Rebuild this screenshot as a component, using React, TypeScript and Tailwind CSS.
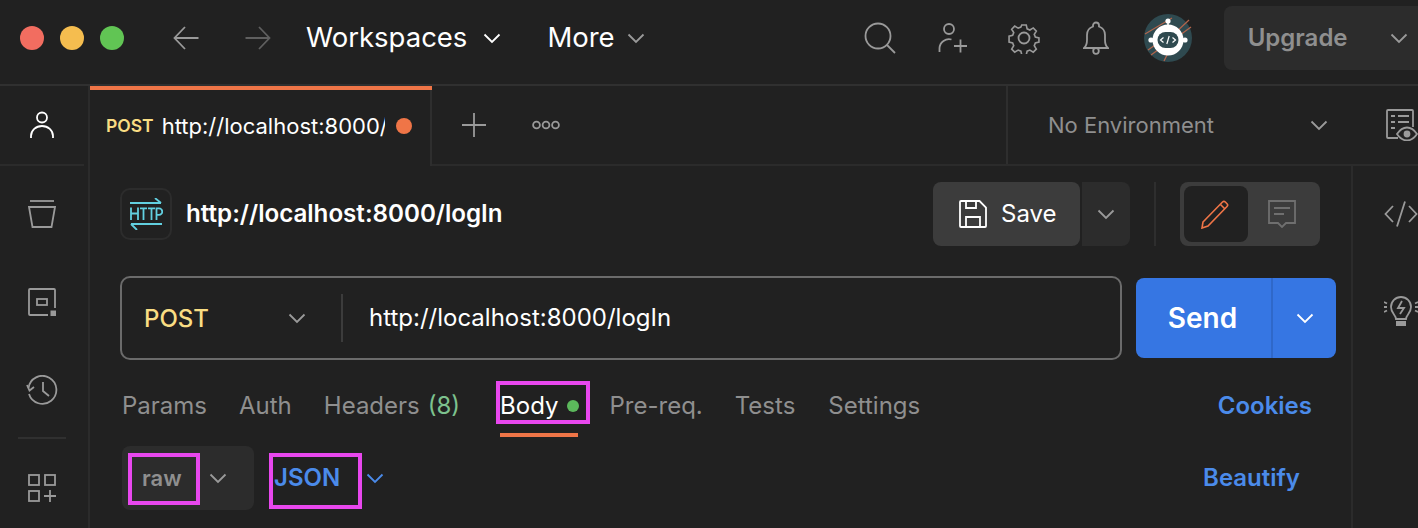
const Chevron = ({ className = "text-[#8f8f8f]", size = 18 }: { className?: string; size?: number }) => (
  <svg width={size} height={size} viewBox="0 0 18 18" fill="none" stroke="currentColor" strokeWidth="1.8" className={`shrink-0 ${className}`}>
    <path d="M1.5 5.5 9 13l7.5-7.5" />
  </svg>
);

function Avatar() {
  return (
    <svg width="48" height="48" viewBox="0 0 48 48" className="shrink-0">
      <circle cx="24" cy="24" r="24" fill="#2f4a50" />
      <g stroke="#b3654c" strokeWidth="1.2" fill="none">
        <path d="M1 20 28 4" />
        <path d="M30 20 45 6" />
        <path d="M36 21 47 13" />
        <path d="M7 41 18 33" />
        <path d="M4 36 14 29" />
        <path d="M20 47 27 33" />
      </g>
      <circle cx="24" cy="7" r="2.6" fill="#fff" />
      <rect x="23.2" y="7" width="1.6" height="5" fill="#fff" />
      <circle cx="7" cy="26" r="2.6" fill="#fff" />
      <circle cx="41" cy="26" r="2.6" fill="#fff" />
      <circle cx="24" cy="26" r="15.5" fill="#fff" />
      <rect x="13.5" y="18" width="21" height="16" rx="8" fill="#2f4a50" />
      <g stroke="#fff" strokeWidth="1.2" fill="none">
        <path d="M19.5 23.5 16.5 26l3 2.5" />
        <path d="M28.5 23.5 31.5 26l-3 2.5" />
        <path d="M25.2 22 22.8 30" />
      </g>
    </svg>
  );
}

function HttpIcon() {
  return (
    <div className="w-[52px] h-[52px] rounded-[10px] border-2 border-[#2c2c2c] flex items-center justify-center shrink-0">
      <svg width="34" height="32" viewBox="0 0 34 32" fill="none" stroke="#62d0e0" strokeWidth="1.8">
        <path d="M1 5h31M26 0l6 5" />
        <path d="M33 26H2M8 32l-6-6" />
        <path d="M2 9.500V22M9 9.500V22M2 15.500h7" />
        <path d="M11 10.400h7M14.500 10.400V22" />
        <path d="M19 10.400h7M22.500 10.400V22" />
        <path d="M27.500 22V10.400h2.500a2.800 2.800 0 0 1 0 6.500h-2.500" />
      </svg>
    </div>
  );
}

function BodyTab() {
  return (
    <div className="relative flex items-center gap-[8px] text-white">
      <span>Body</span>
      <span className="w-[12px] h-[12px] rounded-full bg-[#5cb85c]" />
      <div className="absolute left-[-4px] top-[-7px] w-[94px] h-[43px] border-[4px] border-[#e847ee]" />
      <div className="absolute left-0 top-[45px] w-[78px] h-[4px] bg-[#ef7547]" />
    </div>
  );
}

export default function App() {
  return (
    <div className="w-[1418px] h-[528px] overflow-hidden bg-[#212121] flex flex-col font-['Inter',sans-serif]">
      {/* top bar */}
      <div className="h-[86px] shrink-0 border-b-2 border-[#303030] flex items-center">
        <div className="flex shrink-0 gap-[16px] ml-[20px] mb-[8px]">
          <span className="w-[24px] h-[24px] rounded-full bg-[#f26d60]" />
          <span className="w-[24px] h-[24px] rounded-full bg-[#f5bd4f]" />
          <span className="w-[24px] h-[24px] rounded-full bg-[#61c554]" />
        </div>
        <svg width="26" height="24" viewBox="0 0 26 24" fill="none" stroke="#9a9a9a" strokeWidth="1.8" className="shrink-0 ml-[49px] mb-[8px]">
          <path d="M25.500 12H1.500M12 1 1.500 12 12 23" />
        </svg>
        <svg width="26" height="24" viewBox="0 0 26 24" fill="none" stroke="#5f5f5f" strokeWidth="1.8" className="shrink-0 ml-[46px] mb-[8px]">
          <path d="M.5 12h24M14 1l10.500 11L14 23" />
        </svg>
        <span className="shrink-0 ml-[35px] mb-[8px] text-[27.500px] text-white">Workspaces</span>
        <Chevron className="ml-[16px] mb-[8px] text-white" />
        <span className="shrink-0 ml-[46px] mb-[8px] text-[27.500px] text-white">More</span>
        <Chevron className="ml-[12px] mb-[8px] text-[#9a9a9a]" />
        <svg width="32" height="32" viewBox="0 0 32 32" fill="none" stroke="#9a9a9a" strokeWidth="1.800" className="shrink-0 ml-[219px] mb-[8px]">
          <circle cx="14" cy="14" r="12.500" />
          <path d="m23 23 8 8" />
        </svg>
        <svg width="30" height="32" viewBox="0 0 30 32" fill="none" stroke="#9a9a9a" strokeWidth="1.800" className="shrink-0 ml-[42px] mb-[8px]">
          <circle cx="11" cy="7" r="5" />
          <path d="M1.500 30v-4a9.500 9.500 0 0 1 12-8.500" />
          <path d="M16 24h13M22.500 17.500v13" />
        </svg>
        <svg width="32" height="32" viewBox="0 0 32 32" fill="none" stroke="#9a9a9a" strokeWidth="1.800" className="shrink-0 ml-[40px] mb-[8px]">
          <circle cx="16" cy="16" r="5.500" />
          <path d="M13.500 1.500h5l1 4.300 3 1.300 3.800-2.300 3.400 3.500-2.300 3.700 1.200 3 4 1v4.500l-4 1-1.200 3 2.300 3.800-3.400 3.400-3.800-2.300-3 1.200-1 4h-5l-1-4-3-1.200-3.800 2.300-3.400-3.400 2.300-3.800-1.200-3-4-1V14l4-1 1.200-3-2.300-3.700 3.400-3.500 3.800 2.300 3-1.300z" transform="translate(1.600 1.600) scale(.9)" />
        </svg>
        <svg width="26" height="34" viewBox="0 0 26 34" fill="none" stroke="#9a9a9a" strokeWidth="1.800" className="shrink-0 ml-[43px] mb-[8px]">
          <path d="M1 27c2.500-2 3-4 3-8v-5a9 9 0 0 1 6-8.500V4.500a3 3 0 0 1 6 0V5.500A9 9 0 0 1 22 14v5c0 4 .5 6 3 8z" />
          <circle cx="13" cy="30" r="2.800" />
        </svg>
        <div className="shrink-0 ml-[35px] mb-[8px]"><Avatar /></div>
        <div className="ml-[32px] mb-[8px] w-[220px] h-[64px] shrink-0 bg-[#2c2c2c] rounded-[8px] flex items-center pl-[24px]">
          <span className="text-[24px] font-semibold text-[#8f8f8f]">Upgrade</span>
          <Chevron className="ml-[42px] text-[#9a9a9a]" />
        </div>
      </div>

      <div className="flex flex-1 min-h-0">
        {/* sidebar */}
        <div className="w-[90px] shrink-0 border-r-2 border-[#2b2b2b] flex flex-col">
          <div className="h-[80px] shrink-0 border-b-2 border-[#2b2b2b] flex items-center justify-center mr-[4px]">
            <svg width="26" height="28" viewBox="0 0 26 28" fill="none" stroke="#fff" strokeWidth="1.800">
              <circle cx="13" cy="6.500" r="5" />
              <path d="M2 27v-2a11 10 0 0 1 22 0v2" />
            </svg>
          </div>
          <div className="h-[88px] mt-[4px] flex items-center justify-center mr-[4px]">
            <svg width="28" height="28" viewBox="0 0 28 28" fill="none" stroke="#9a9a9a" strokeWidth="1.800">
              <path d="M2 1h24" />
              <path d="M1 7h26l-3.500 20h-19z" />
            </svg>
          </div>
          <div className="h-[88px] flex items-center justify-center mr-[4px]">
            <svg width="28" height="28" viewBox="0 0 28 28" fill="none" stroke="#9a9a9a" strokeWidth="1.800">
              <path d="M27 20V2a1 1 0 0 0-1-1H2a1 1 0 0 0-1 1v24a1 1 0 0 0 1 1h18" />
              <rect x="9" y="11" width="10" height="6" />
              <rect x="22.500" y="22.500" width="5.500" height="5.500" fill="#9a9a9a" stroke="none" />
            </svg>
          </div>
          <div className="h-[88px] flex items-center justify-center mr-[4px]">
            <svg width="32" height="30" viewBox="0 0 32 30" fill="none" stroke="#9a9a9a" strokeWidth="1.800">
              <path d="M3 19a14 14 0 1 0-.500-6" />
              <path d="M1 10l2.500 5.500L8 12" />
              <path d="M17 7v9l6 5" />
            </svg>
          </div>
          <div className="h-[2px] w-[48px] ml-[18px] mt-[3px] bg-[#303030]" />
          <div className="mt-[35px] flex justify-center mr-[4px]">
            <svg width="28" height="28" viewBox="0 0 28 28" fill="none" stroke="#9a9a9a" strokeWidth="1.800">
              <rect x="1" y="1" width="10" height="10" />
              <rect x="17" y="1" width="10" height="10" />
              <rect x="1" y="17" width="10" height="10" />
              <path d="M16 22h12M22 16v12" />
            </svg>
          </div>
        </div>

        <div className="flex-1 min-w-0 flex flex-col">
          {/* tab strip */}
          <div className="h-[80px] shrink-0 flex">
            <div className="w-[342px] shrink-0 border-t-4 border-[#ef7547]">
              <div className="h-full border-r-2 border-[#2e2e2e] flex items-center pl-[16px] pb-[4px]">
                <span className="text-[17.500px] font-semibold text-[#f9dd83] mr-[8px]">POST</span>
                <span className="text-[22px] text-white w-[223px] overflow-hidden whitespace-nowrap">http://localhost:8000/logIn</span>
                <span className="ml-[11px] w-[16px] h-[16px] rounded-full bg-[#ef7547]" />
              </div>
            </div>
            <div className="flex-1 min-w-0 border-b-2 border-[#2b2b2b] flex items-center">
              <svg width="26" height="26" viewBox="0 0 26 26" stroke="#9a9a9a" strokeWidth="1.800" className="shrink-0 ml-[29px]">
                <path d="M13 1v24M1 13h24" />
              </svg>
              <svg width="28" height="10" viewBox="0 0 28 10" fill="none" stroke="#9a9a9a" strokeWidth="1.800" className="shrink-0 ml-[45px]">
                <circle cx="4.500" cy="5" r="3.400" />
                <circle cx="14" cy="5" r="3.400" />
                <circle cx="23.500" cy="5" r="3.400" />
              </svg>
              <div className="ml-[446px] h-full w-[2px] shrink-0 bg-[#2e2e2e]" />
              <span className="ml-[40px] shrink-0 text-[22px] text-[#8f8f8f]">No Environment</span>
              <Chevron className="ml-[96px] text-[#9a9a9a]" />
              <svg width="32" height="32" viewBox="0 0 32 32" fill="none" stroke="#9a9a9a" strokeWidth="1.800" className="ml-[58px] shrink-0">
                <path d="M12 29H2a1 1 0 0 1-1-1V2a1 1 0 0 1 1-1h24a1 1 0 0 1 1 1v16" />
                <path d="M5 7h4M12 7h11M5 13h4M12 13h11M5 19h4" />
                <path d="M11 25c3-4.500 6-6.500 10-6.500s7 2 10 6.500c-3 4.500-6 6.500-10 6.500s-7-2-10-6.500z" />
                <circle cx="21" cy="25" r="2.500" fill="#9a9a9a" />
              </svg>
            </div>
          </div>

          <div className="flex flex-1 min-h-0">
            {/* request pane */}
            <div className="w-[1261px] shrink-0 pl-[30px] pr-[15px] pt-[16px]">
              <div className="flex items-center h-[64px]">
                <HttpIcon />
                <span className="ml-[14px] text-[24.150px] font-semibold text-white">http://localhost:8000/logIn</span>
                <div className="ml-auto mr-[16px] flex items-center">
                  <div className="w-[147px] h-[64px] bg-[#3c3c3c] rounded-[8px] flex items-center pl-[26px]">
                    <svg width="28" height="28" viewBox="0 0 28 28" fill="none" stroke="#fff" strokeWidth="1.800">
                      <path d="M1 2a1 1 0 0 1 1-1h18.500L27 7.500V26a1 1 0 0 1-1 1H2a1 1 0 0 1-1-1z" />
                      <path d="M7 1v7h10V1" />
                      <path d="M7 27V17h14v10" />
                    </svg>
                    <span className="ml-[14px] text-[24px] text-white">Save</span>
                  </div>
                  <div className="ml-[2px] w-[48px] h-[64px] bg-[#2c2c2c] rounded-r-[8px] flex items-center justify-center">
                    <Chevron className="text-[#9a9a9a]" />
                  </div>
                  <div className="ml-[24px] w-[2px] h-[64px] bg-[#2e2e2e]" />
                  <div className="ml-[24px] w-[140px] h-[64px] bg-[#3c3c3c] rounded-[8px] flex items-center p-[4px]">
                    <div className="w-[64px] h-[56px] bg-[#212121] rounded-[8px] flex items-center justify-center">
                      <svg width="30" height="30" viewBox="0 0 30 30" fill="none" stroke="#ef7547" strokeWidth="1.600">
                        <path d="M2 23 21.500 3a2 2 0 0 1 2.800 0l1.700 1.700a2 2 0 0 1 0 2.800L7 27l-6 2z" />
                        <path d="m19.500 5.500 4.500 4.500" />
                      </svg>
                    </div>
                    <svg width="28" height="28" viewBox="0 0 28 28" fill="none" stroke="#6f6f6f" strokeWidth="1.800" className="ml-[20px]">
                      <path d="M1 1h26v22H18l-4 4-4-4H1z" />
                      <path d="M6 8h16M6 14h10" />
                    </svg>
                  </div>
                </div>
              </div>

              <div className="mt-[30px] flex items-center gap-[14px]">
                <div className="w-[1002px] h-[84px] shrink-0 border-2 border-[#6b6b6b] rounded-[10px] flex items-center pl-[22px]">
                  <span className="w-[144px] mt-[2px] text-[24px] font-medium text-[#f9dd83]">POST</span>
                  <Chevron className="text-[#9a9a9a]" />
                  <div className="ml-[35px] w-[2px] h-[48px] bg-[#3c3c3c]" />
                  <span className="ml-[26px] text-[24px] text-white">http://localhost:8000/logIn</span>
                </div>
                <div className="w-[200px] h-[80px] shrink-0 bg-[#3676e3] rounded-[8px] flex items-center">
                  <span className="w-[135px] pr-[2px] text-center text-[28px] font-semibold text-white">Send</span>
                  <div className="w-[2px] h-full bg-[#2f68c9]" />
                  <Chevron className="ml-[23px] text-white" />
                </div>
              </div>

              <div className="mt-[31px] h-[30px] flex items-center text-[24px] text-[#8f8f8f] whitespace-nowrap">
                <span className="ml-[2px]">Params</span>
                <span className="ml-[32px]">Auth</span>
                <span className="ml-[32px]">Headers</span>
                <span className="ml-[8px] text-[#7dc28e]">(8)</span>
                <span className="ml-[40px]"><BodyTab /></span>
                <span className="ml-[31px]">Pre-req.</span>
                <span className="ml-[32px]">Tests</span>
                <span className="ml-[33px]">Settings</span>
                <span className="ml-auto mr-[24px] font-semibold text-[#4b8bea]">Cookies</span>
              </div>

              <div className="mt-[25px] flex items-center">
                <div className="relative w-[132px] h-[64px] shrink-0 ml-[2px] bg-[#2c2c2c] rounded-[8px] flex items-center pl-[20px]">
                  <span className="text-[22px] font-semibold text-[#8f8f8f]">raw</span>
                  <Chevron className="ml-[27px] text-[#9a9a9a]" />
                  <div className="absolute left-[6px] top-[7px] w-[72px] h-[52px] border-[4px] border-[#e847ee]" />
                </div>
                <div className="relative ml-[15px] w-[93px] h-[64px] flex items-center pl-[5px]">
                  <span className="text-[24px] font-semibold text-[#4b8bea]">JSON</span>
                  <div className="absolute left-0 top-[7px] w-[93px] h-[56px] border-[4px] border-[#e847ee]" />
                </div>
                <Chevron className="ml-[4px] text-[#4b8bea]" />
                <span className="ml-auto mr-[36px] text-[24px] font-semibold text-[#4b8bea]">Beautify</span>
              </div>
            </div>

            {/* right rail */}
            <div className="flex-1 min-w-0 border-l-2 border-[#2b2b2b] pl-[31px]">
              <svg width="34" height="26" viewBox="0 0 34 26" fill="none" stroke="#9a9a9a" strokeWidth="1.800" className="mt-[35px]">
                <path d="M9 5 1.500 13 9 21M25 5l7.500 8L25 21M21 .5 13 25.500" />
              </svg>
              <svg width="34" height="34" viewBox="0 0 34 34" fill="none" stroke="#9a9a9a" strokeWidth="1.800" className="mt-[67px]">
                <path d="M12 25c0-4-5-5.500-5-12a10 10 0 0 1 20 0c0 6.500-5 8-5 12z" />
                <path d="m18 7-4 7h6l-4 6" />
                <rect x="12" y="27" width="10" height="5" fill="#9a9a9a" stroke="none" />
                <path d="M0 8l3 1.500M0 18l3-1.500M34 8l-3 1.500M34 18l-3-1.500M0 13h3M31 13h3" />
              </svg>
            </div>
          </div>
        </div>
      </div>
    </div>
  );
}
